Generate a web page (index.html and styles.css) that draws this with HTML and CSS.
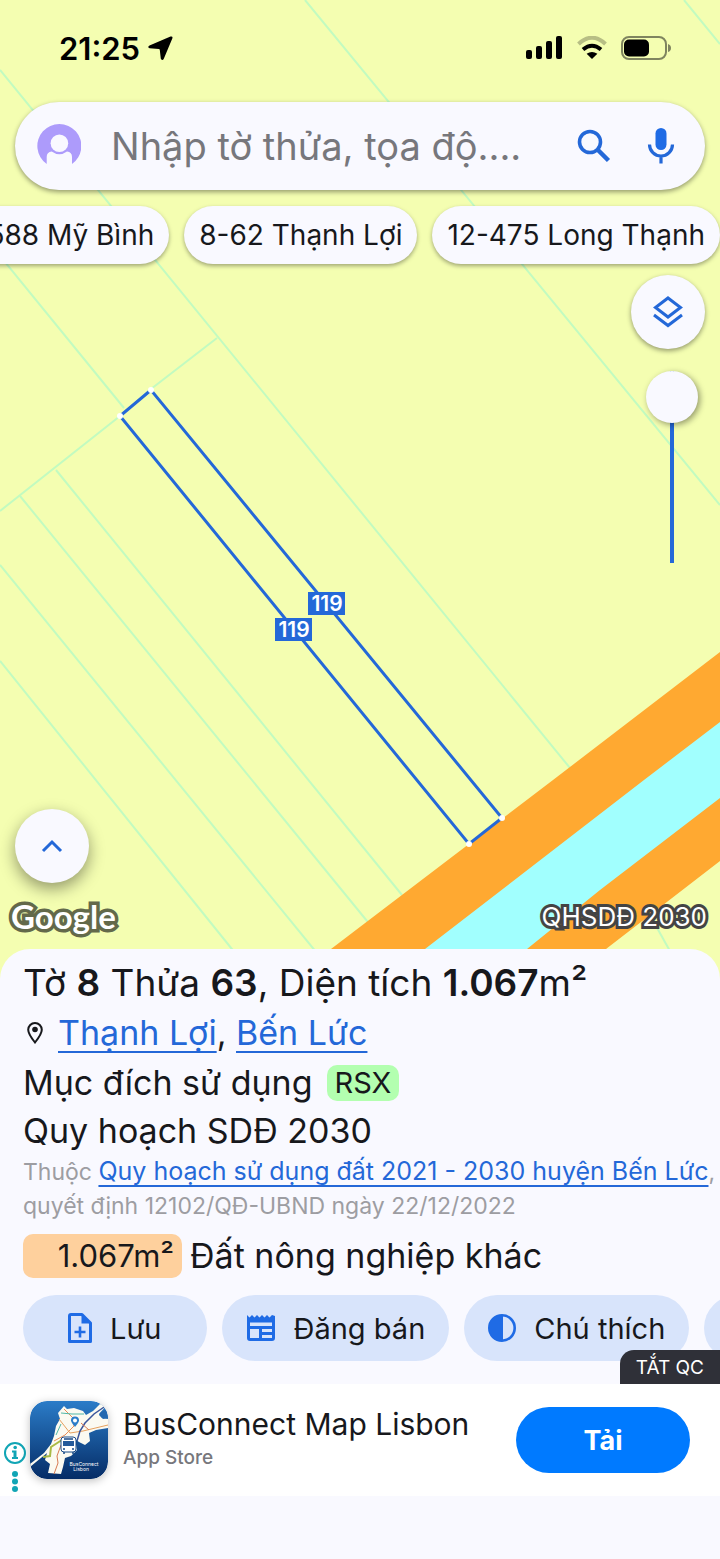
FILE: index.html
```html
<!DOCTYPE html>
<html lang="vi">
<head>
  <meta charset="UTF-8">
  <meta name="viewport" content="width=device-width, initial-scale=1.0">
  <title>Tờ 8 Thửa 63</title>
  <link rel="stylesheet" href="styles.css">
</head>
<body>
  <main class="map">
    <svg class="map-canvas" viewBox="0 0 720 979" preserveAspectRatio="xMidYMin slice" aria-hidden="true">
      <!-- neighbouring parcels -->
      <g class="parcel-lines">
        <path d="M0 70L570 768M0 256L124 408M305 0L720 505M684 0L720 44" />
        <path d="M0 511L120 416L151 389L217 338" />
        <path d="M56 470L402 895M20 496L385 943M0 565L330 969M0 661L248 969" />
      </g>
      <!-- road and canal -->
      <path class="road" d="M720 652L553 780L331 949L304 969L720 969Z" />
      <path class="canal" d="M720 722L644 780L425 949L398 969L720 969Z" />
      <path class="road" d="M720 798L600 890L527 949L502 969L720 969Z" />
      <path class="field" d="M720 861L606 949L580 969L580 979L720 979Z" />
      <path class="parcel-line" d="M656 926L680 969" />
      <!-- selected parcel -->
      <path class="selected" d="M151 390L120 416L469 844L502 818Z" />
      <g class="corners">
        <circle cx="151" cy="390" r="3" /><circle cx="120" cy="416" r="3" />
        <circle cx="469" cy="844" r="3" /><circle cx="502" cy="818" r="3" />
      </g>
      <g class="lengths">
        <rect x="308" y="592" width="37" height="23" /><text x="327" y="611">119</text>
        <rect x="275" y="618" width="37" height="23" /><text x="294" y="637">119</text>
      </g>
    </svg>

    <header class="status">
      <span class="clock">21:25</span>
      <svg width="25" height="25" viewBox="0 0 25 25"><path d="M22.500.6Q25 0 24.400 2.300L15.800 22.800Q14.500 25.300 12.800 22.800L11.800 14Q11.700 13.200 10.900 13.100L1.600 12.300Q-1 11.300 1.500 9.500Z" /></svg>
      <div class="status-icons">
        <svg width="37" height="24" viewBox="0 0 37 24"><rect y="14" width="6" height="9" rx="2" /><rect x="10" y="10" width="6" height="13" rx="2" /><rect x="20" y="5" width="6" height="18" rx="2" /><rect x="30" width="6" height="23" rx="2" /></svg>
        <svg width="30" height="24" viewBox="0 0 30 24"><g fill="none" stroke="#000" stroke-width="4"><path d="M1.500 8Q15-4.500 28.500 8" opacity=".25" /><path d="M6 13.500Q15 6 24 13.500" /></g><path d="M15 23L9.600 17.800Q15 14 20.400 17.800Z" /></svg>
        <svg width="50" height="24" viewBox="0 0 50 24"><rect x="1" y="1" width="44" height="22" rx="7" fill="none" stroke="#7f855f" stroke-width="2" /><rect x="3" y="3.500" width="25" height="17" rx="5" /><path d="M47 8Q50 9 50 12T47 16Z" fill="#7f855f" /></svg>
      </div>
    </header>

    <form class="search">
      <svg class="avatar" width="44" height="44" viewBox="0 0 44 44"><path fill="#ad9bfb" d="M9.700 40A22 22 0 1 1 35 40V33Q35 28 30 27.500Q22.400 33 14.700 27.500Q9.700 28 9.700 33Z" /><circle cx="22.400" cy="19.300" r="8.800" fill="#f9f8ff" /></svg>
      <input type="text" aria-label="Tìm kiếm" placeholder="Nhập tờ thửa, tọa độ....">
      <button type="submit" aria-label="Tìm"><svg width="34" height="34" viewBox="0 0 34 34"><g fill="none" stroke="#2468d8"><circle cx="13" cy="13" r="10.500" stroke-width="3.600" /><path d="M20.500 20.500L31.500 31.500" stroke-width="4.500" /></g></svg></button>
      <button type="button" aria-label="Giọng nói"><svg width="28" height="36" viewBox="0 0 28 36"><rect x="8.500" y="0" width="11" height="22" rx="5.500" fill="#1f6be5" /><path d="M2.500 16.500A11.500 11.500 0 0 0 25.500 16.500M14 28V35.500" fill="none" stroke="#2468d8" stroke-width="3.200" /></svg></button>
    </form>

    <nav class="chips">
      <button>12-588 Mỹ Bình</button>
      <button>8-62 Thạnh Lợi</button>
      <button>12-475 Long Thạnh</button>
    </nav>

    <div class="tools">
      <button class="round" aria-label="Lớp bản đồ"><svg width="32" height="34" viewBox="0 0 32 34" fill="none" stroke="#2468d8" stroke-width="3"><path d="M16 3L28.500 12.500L16 22L3.500 12.500ZM2 20L16 30.500L30 20" /></svg></button>
      <input class="opacity" type="range" min="0" max="100" value="100" aria-label="Độ mờ">
    </div>

    <div class="map-bottom">
      <button class="round lifted" aria-label="Mở rộng"><svg width="22" height="14" viewBox="0 0 22 14" fill="none" stroke="#2468d8" stroke-width="3"><path d="M2 12L11 3L20 12" /></svg></button>
      <div class="credits">
        <span class="google">Google</span>
        <span class="plan">QHSDĐ 2030</span>
      </div>
    </div>
  </main>

  <section class="sheet">
    <h1>Tờ <b>8</b> Thửa <b>63</b>, Diện tích <b>1.067</b>m²</h1>
    <p class="line place">
      <svg width="16" height="22" viewBox="0 0 16 22"><path d="M8 20.500Q1.200 12 1.200 7.800A6.800 6.800 0 0 1 14.800 7.800Q14.800 12 8 20.500Z" fill="none" stroke="#17181c" stroke-width="2" /><circle cx="8" cy="7.500" r="2.800" fill="#17181c" /></svg>
      <span><a href="#">Thạnh Lợi</a>, <a href="#">Bến Lức</a></span>
    </p>
    <p class="line">Mục đích sử dụng <span class="tag">RSX</span></p>
    <p class="line">Quy hoạch SDĐ 2030</p>
    <p class="note">Thuộc <a href="#">Quy hoạch sử dụng đất 2021 - 2030 huyện Bến Lức</a>, quyết định 12102/QĐ-UBND ngày 22/12/2022</p>
    <p class="line land"><span class="area">1.067m²</span> Đất nông nghiệp khác</p>
    <div class="actions">
      <button class="save"><svg width="24" height="30" viewBox="0 0 24 30"><path d="M3 1.500H14L22.500 10V28.500H1.500V3Q1.500 1.500 3 1.500Z" fill="none" stroke="#1f6be5" stroke-width="3" stroke-linejoin="round" /><path d="M13.500 1.500V10.500H22.500Z" fill="#1f6be5" /><path d="M12 13.500V24.500M6.500 19H17.500" stroke="#1f6be5" stroke-width="2.600" /></svg>Lưu</button>
      <button><svg width="30" height="26" viewBox="0 0 30 26"><path fill="#1f6be5" fill-rule="evenodd" d="M1 0L3.500 2.500L6 0L8.500 2.500L11 0L13.500 2.500L16 0L18.500 2.500L21 0L23.500 2.500L26 0L29 1V23Q29 26 26 26H4Q1 26 1 23ZM4 7.500V11H26V7.500ZM4 14V23H13V14ZM16 14V17H26V14ZM16 20V23H26V20Z" /></svg>Đăng bán</button>
      <button><svg width="28" height="28" viewBox="0 0 28 28"><circle cx="14" cy="14" r="12.700" fill="none" stroke="#1f6be5" stroke-width="2.600" /><path d="M15 1V27H14A13 13 0 0 1 14 1Z" fill="#1f6be5" /></svg>Chú thích</button>
      <button class="more" aria-label="Thêm"></button>
    </div>
  </section>

  <aside class="ad">
    <button class="ad-off">TẮT QC</button>
    <svg class="ad-info" width="24" height="54" viewBox="0 0 24 54"><circle cx="12" cy="11" r="10" fill="none" stroke="#11a5b5" stroke-width="2" /><path d="M9 8.500H13.500V15H15V17H9V15H10.500V10.500H9Z" fill="#11a5b5" /><g fill="#11a5b5"><circle cx="12.200" cy="5.500" r="1.800" /><circle cx="12" cy="32" r="3" /><circle cx="12" cy="39.500" r="3" /><circle cx="12" cy="47" r="3" /></g></svg>
    <svg class="ad-icon" width="78" height="78" viewBox="0 0 78 78">
      <defs>
        <linearGradient id="sea" x1="0" y1="0" x2="0" y2="1"><stop offset="0" stop-color="#2b7cc8" /><stop offset="1" stop-color="#052c66" /></linearGradient>
        <clipPath id="tile"><rect width="78" height="78" rx="17" /></clipPath>
      </defs>
      <g clip-path="url(#tile)">
        <rect width="78" height="78" fill="url(#sea)" />
        <path fill="#fbfaf1" d="M34 5L37 8L44 7L53 10L56 14L63 10L70 3L76 5L69 13L72 17L78 18V27L66 29L59 32L60 40L55 44L49 41L45 38L47 49L41 55L35 57L33 66L31 73L18 72L20 63L15 59L17 52L6 61L0 66V63L14 52L21 43L24 35L26 25L30 18L28 12Z" />
        <path fill="#2368b0" d="M78 8L71 11L69 14L73 18L78 17Z" />
        <g fill="none" stroke-width="1">
          <path d="M34 8L43 17L44 25L35 34L24 40" stroke="#e98c55" />
          <path d="M29 18L40 32L53 30L78 24" stroke="#e5a05d" />
          <path d="M31 12L42 13L54 13M26 34L31 23" stroke="#51b8a7" />
          <path d="M77 4L64 13L55 22L50 30L47 40" stroke="#3a559b" stroke-width="1.500" />
          <path d="M31 44L27 55L28 62L24 73M51 22L59 29" stroke="#d77a52" />
          <path d="M35 37L21 46L20 55L13 56" stroke="#a9ba45" stroke-width="2" />
        </g>
        <path d="M45 26Q41 21 41 19.500A4 4 0 0 1 49 19.500Q49 21 45 26Z" fill="#2b7cc8" /><circle cx="45" cy="19.500" r="2" fill="#fff" />
        <rect x="31" y="36" width="15" height="15" rx="3" fill="#fff" stroke="#174a87" /><rect x="33" y="40" width="11" height="5" fill="#245a9a" /><path d="M34 38H43M33 48H35M42 48H44M34 51V53M43 51V53" stroke="#174a87" stroke-width="1.500" />
        <text x="54" y="65">BusConnect</text><text x="51" y="70">Lisbon</text>
      </g>
    </svg>
    <div class="ad-text">
      <strong>BusConnect Map Lisbon</strong>
      <small>App Store</small>
    </div>
    <button class="install">Tải</button>
  </aside>
</body>
</html>
```
FILE: styles.css
```css
* { box-sizing: border-box; }
body {
  margin: 0;
  min-height: 100vh;
  display: flex;
  flex-direction: column;
  font-family: Inter, "Noto Sans", sans-serif;
  color: #17181c;
  background: #f9f9ff;
  padding-bottom: 63px;
}
h1, p { margin: 0; }
button, input { font: inherit; color: inherit; border: none; margin: 0; }
button { cursor: pointer; white-space: nowrap; }
a { color: #2468d8; text-decoration-thickness: 2px; text-underline-offset: 6px; text-decoration-skip-ink: none; }
svg { flex-shrink: 0; }

/* map */
.map {
  position: relative;
  flex: 1;
  display: flex;
  flex-direction: column;
  padding-bottom: 30px;
  background: #f4feb1;
  overflow: hidden;
}
.map-canvas { position: absolute; inset: 0; width: 100%; height: 100%; }
.map > :not(.map-canvas) { position: relative; }
.parcel-lines, .parcel-line { fill: none; stroke: #c2fbc0; stroke-width: 2; }
.road { fill: #ffa931; }
.canal { fill: #a1fffe; }
.field { fill: #f4feb1; }
.selected { fill: none; stroke: #2468d8; stroke-width: 3; }
.corners { fill: #fff; }
.lengths rect { fill: #2468d8; }
.lengths text { fill: #fff; font-size: 21px; font-weight: 600; text-anchor: middle; }

.status {
  display: flex;
  align-items: center;
  gap: 8px;
  height: 102px;
  padding: 0 49px 6px 59px;
  color: #000;
}
.clock { font-size: 31px; font-weight: 600; }
.status-icons { display: flex; gap: 14px; margin-left: auto; }

.search {
  display: flex;
  align-items: center;
  height: 88px;
  margin: 0 15px;
  padding: 0 30px 0 22px;
  border-radius: 44px;
  background: #f9f9ff;
  box-shadow: 0 2px 5px rgba(0,0,0,0.4);
}
.search input {
  flex: 1;
  min-width: 0;
  padding: 0 0 0 30px;
  font-size: 38px;
  background: none;
  outline: none;
}
.search input::placeholder { color: #77777c; opacity: 1; }
.search button { display: flex; padding: 0; background: none; margin-left: 24px; }
.search button + button { margin-left: 36px; }

.chips {
  display: flex;
  justify-content: flex-end;
  gap: 15px;
  margin-top: 16px;
}
.chips button {
  flex-shrink: 0;
  height: 58px;
  padding: 0 15px;
  border-radius: 29px;
  font-size: 28px;
  background: #f9f9ff;
  box-shadow: 0 2px 4px rgba(0,0,0,0.35);
}

.round {
  display: flex;
  align-items: center;
  justify-content: center;
  width: 74px;
  height: 74px;
  padding: 0;
  border-radius: 50%;
  background: #f9f9ff;
  box-shadow: 0 2px 5px rgba(0,0,0,0.4);
}
.lifted { margin-left: 4px; box-shadow: 0 6px 16px rgba(0,0,0,0.4); }
.tools {
  display: flex;
  flex-direction: column;
  align-items: flex-end;
  gap: 22px;
  margin: 11px 15px 0;
}
.opacity {
  appearance: none;
  writing-mode: vertical-lr;
  direction: rtl;
  width: 52px;
  height: 192px;
  margin-right: 7px;
  background: linear-gradient(#2468d8, #2468d8) center / 4px 100% no-repeat;
}
.opacity::-webkit-slider-thumb {
  appearance: none;
  width: 52px;
  height: 52px;
  border-radius: 50%;
  background: #f9f9ff;
  box-shadow: 2px 2px 6px rgba(0,0,0,0.4);
}

.map-bottom { margin-top: auto; padding: 0 13px 0 11px; }
.credits {
  display: flex;
  justify-content: space-between;
  align-items: center;
  height: 66px;
}
.google, .plan { color: #fff; paint-order: stroke fill; }
.google { font-family: Lato, sans-serif; font-size: 33px; font-weight: 700; -webkit-text-stroke: 7px #63694a; }
.plan { font-size: 26px; -webkit-text-stroke: 6px #444; }

/* parcel details */
.sheet {
  position: relative;
  margin-top: -30px;
  padding: 10px 0 23px 23px;
  border-radius: 30px 30px 0 0;
  background: #f9f9ff;
  overflow: hidden;
}
.sheet h1 { font-size: 37px; font-weight: 400; line-height: 48px; }
.sheet b { font-weight: 600; }
.line { display: flex; align-items: center; font-size: 34px; line-height: 48px; }
.place { height: 52px; }
.place svg { margin: 0 15px 0 4px; }
.tag {
  margin-left: 14px;
  padding: 0 8px;
  border-radius: 10px;
  font-size: 29px;
  line-height: 36px;
  background: #b3ffb0;
}
.note { font-size: 23px; line-height: 34px; color: #9d9da2; }
.note a { font-size: 25px; line-height: 1; text-underline-offset: 5px; }
.land { height: 66px; }
.area {
  width: 159px;
  margin-right: 8px;
  padding-right: 8px;
  border-radius: 10px;
  font-size: 31px;
  line-height: 44px;
  text-align: right;
  background: #fed09d;
}
.actions { display: flex; gap: 15px; margin-top: 6px; }
.actions button {
  display: flex;
  align-items: center;
  justify-content: center;
  gap: 18px;
  flex-shrink: 0;
  height: 66px;
  padding: 0 24px;
  border-radius: 33px;
  font-size: 29px;
  background: #d8e4fb;
}
.actions .save { padding: 0 45px; }
.actions .more { width: 185px; }

/* ad banner */
.ad {
  position: relative;
  display: flex;
  align-items: center;
  height: 112px;
  padding: 0 30px 0 3px;
  background: #fff;
}
.ad-off {
  position: absolute;
  right: 0;
  bottom: 100%;
  height: 34px;
  padding: 0 16px;
  border-radius: 14px 0 0 0;
  font-size: 19px;
  color: #fff;
  background: #2f3038;
}
.ad-info { align-self: flex-end; }
.ad-icon { margin: 0 15px 0 3px; border-radius: 17px; box-shadow: 0 2px 8px rgba(0,0,0,0.25); }
.ad-icon text { fill: #fff; font-size: 5px; text-anchor: middle; }
.ad-text { flex: 1; min-width: 0; }
.ad-text strong { display: block; font-size: 30px; font-weight: 400; line-height: 36px; }
.ad-text small { display: block; font-size: 19px; font-weight: 500; line-height: 32px; color: #77777c; }
.install {
  width: 174px;
  height: 66px;
  border-radius: 33px;
  font-size: 27px;
  font-weight: 700;
  color: #fff;
  background: #007aff;
}
```
